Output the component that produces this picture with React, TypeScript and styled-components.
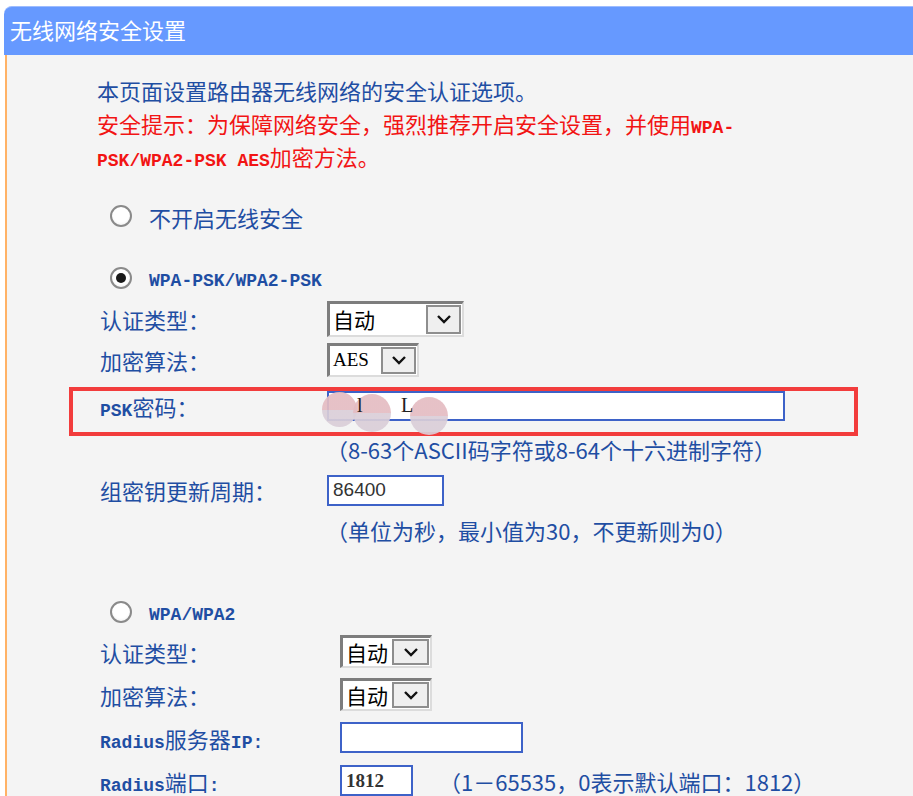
import React from "react";
import styled, { createGlobalStyle } from "styled-components";

const GlobalStyle = createGlobalStyle`
  html, body { margin: 0; padding: 0; background: #ffffff; }
  body { font-family: "Noto Sans CJK SC", sans-serif; }
  #root { width: 913px; height: 796px; overflow: hidden; }
`;

const BLUE = "#1f4ea3";
const RED = "#f21414";

const Page = styled.div`
  padding: 6px 0 0 4px;
  height: 796px;
  box-sizing: border-box;
  overflow: hidden;
`;

const Header = styled.div`
  height: 49px;
  box-sizing: border-box;
  background: #6699ff;
  border-top: 1px solid #9dbcff;
  border-top-left-radius: 8px;
  color: #ffffff;
  font-size: 22px;
  display: flex;
  align-items: center;
  padding: 0 0 5px 6px;
`;

const Body = styled.div`
  margin-left: 1px;
  background: #f4f4f4;
  border-left: 2px solid #ffb266;
  height: 741px;
  box-sizing: border-box;
  padding: 19px 0 0 93px;
  display: flex;
  flex-direction: column;
  color: ${BLUE};
  font-size: 22px;
`;

const Intro = styled.div`
  margin-left: -3px;
`;

const Line = styled.div<{ $red?: boolean }>`
  height: 33px;
  line-height: 33px;
  white-space: nowrap;
  color: ${(p) => (p.$red ? RED : "inherit")};
`;

const Lat = styled.span<{ $bold?: boolean; $size?: number }>`
  font-family: "Liberation Mono", monospace;
  font-size: ${(p) => p.$size ?? 18}px;
  font-weight: ${(p) => (p.$bold ? 700 : 400)};
`;

const Row = styled.div<{ $mt: number; $h: number }>`
  display: flex;
  align-items: center;
  margin-top: ${(p) => p.$mt}px;
  height: ${(p) => p.$h}px;
`;

const Label = styled.div<{ $w: number }>`
  width: ${(p) => p.$w}px;
  flex: none;
  white-space: nowrap;
`;

const RadioRow = styled(Row)`
  padding-left: 10px;
  gap: 17px;
`;

const RadioLabel = styled.span<{ $latin?: boolean }>`
  padding-top: ${(p) => (p.$latin ? 6 : 2)}px;
  font-family: ${(p) =>
    p.$latin ? `"Liberation Mono", monospace` : `"Noto Sans CJK SC", sans-serif`};
  font-size: ${(p) => (p.$latin ? 18 : 22)}px;
  font-weight: ${(p) => (p.$latin ? 700 : 400)};
`;

const RadioDot = styled.span<{ $checked?: boolean }>`
  width: 22px;
  height: 22px;
  box-sizing: border-box;
  border-radius: 50%;
  border: 2px solid #8a8a8a;
  background: radial-gradient(circle at 50% 40%, #ffffff 55%, #e8e8e8 100%);
  display: flex;
  align-items: center;
  justify-content: center;
  &::after {
    content: "";
    display: ${(p) => (p.$checked ? "block" : "none")};
    width: 10px;
    height: 10px;
    border-radius: 50%;
    background: #1a1a1a;
  }
`;

const SelectBox = styled.div<{ $w: number; $h: number }>`
  width: ${(p) => p.$w}px;
  height: ${(p) => p.$h}px;
  box-sizing: border-box;
  background: #ffffff;
  border-top: 3px solid #7d7d7d;
  border-left: 3px solid #7d7d7d;
  border-right: 2px solid #dcdcdc;
  border-bottom: 2px solid #dcdcdc;
  display: flex;
  align-items: stretch;
  color: #000000;
`;

const SelectText = styled.div<{ $serif?: boolean }>`
  flex: 1;
  display: flex;
  align-items: center;
  padding-left: 3px;
  font-family: ${(p) =>
    p.$serif ? `"Liberation Serif", serif` : `"Noto Sans CJK SC", sans-serif`};
  font-size: ${(p) => (p.$serif ? 19 : 21)}px;
`;

const SelectButton = styled.div<{ $bw: number }>`
  width: ${(p) => p.$bw}px;
  margin: 1px 1px 1px 0;
  box-sizing: border-box;
  background: #efefef;
  border: 2px solid #8e8e8e;
  display: flex;
  align-items: center;
  justify-content: center;
`;

const Chevron = () => (
  <svg width="16" height="10" viewBox="0 0 16 10">
    <polyline points="2,2 8,8 14,2" fill="none" stroke="#111" strokeWidth="2.4" />
  </svg>
);

const Select = ({
  w,
  h,
  bw,
  value,
  serif,
}: {
  w: number;
  h: number;
  bw: number;
  value: string;
  serif?: boolean;
}) => (
  <SelectBox $w={w} $h={h}>
    <SelectText $serif={serif}>{value}</SelectText>
    <SelectButton $bw={bw}>
      <Chevron />
    </SelectButton>
  </SelectBox>
);

const Input = styled.div<{ $w: number; $h: number; $serif?: boolean }>`
  position: relative;
  width: ${(p) => p.$w}px;
  height: ${(p) => p.$h}px;
  box-sizing: border-box;
  background: #ffffff;
  border: 2px solid #3d62c8;
  display: flex;
  align-items: center;
  padding-left: 4px;
  color: #333333;
  font-family: ${(p) =>
    p.$serif ? `"Liberation Serif", serif` : `"Liberation Sans", sans-serif`};
  font-size: 19px;
  font-weight: ${(p) => (p.$serif ? 700 : 400)};
`;

const Highlight = styled.div`
  margin-top: 10px;
  margin-left: -31px;
  width: 789px;
  box-sizing: border-box;
  border: 4px solid #f23c3c;
  padding: 0 0 11px 27px;
`;

const Blob = styled.span<{ $x: number; $y: number; $d: number }>`
  position: absolute;
  left: ${(p) => p.$x}px;
  top: ${(p) => p.$y}px;
  width: ${(p) => p.$d}px;
  height: ${(p) => p.$d}px;
  border-radius: 50%;
  background: linear-gradient(
    to bottom,
    rgba(228, 188, 194, 0.92) 0%,
    rgba(228, 188, 194, 0.92) 50%,
    rgba(218, 206, 216, 0.92) 50%,
    rgba(218, 206, 216, 0.92) 100%
  );
`;

const Glyph = styled.span<{ $x: number }>`
  position: absolute;
  left: ${(p) => p.$x}px;
  top: 1px;
  font-family: "Liberation Serif", serif;
  font-size: 20px;
  font-weight: 400;
  color: #222;
  z-index: 1;
`;

const Hint = styled.div<{ $mt: number; $pl: number; $h?: number }>`
  margin-top: ${(p) => p.$mt}px;
  padding-left: ${(p) => p.$pl}px;
  height: ${(p) => p.$h ?? 26}px;
  display: flex;
  align-items: center;
  white-space: nowrap;
`;

const InlineHint = styled.span`
  margin-left: 26px;
  white-space: nowrap;
`;

export default function App() {
  return (
    <>
      <GlobalStyle />
      <Page>
        <Header>无线网络安全设置</Header>
        <Body>
          <Intro>
            <Line>本页面设置路由器无线网络的安全认证选项。</Line>
            <Line $red>
              安全提示：为保障网络安全，强烈推荐开启安全设置，并使用<Lat $bold>WPA-</Lat>
            </Line>
            <Line $red>
              <Lat $bold>PSK/WPA2-PSK AES</Lat>加密方法。
            </Line>
          </Intro>

          <RadioRow $mt={26} $h={34}>
            <RadioDot />
            <RadioLabel>不开启无线安全</RadioLabel>
          </RadioRow>

          <RadioRow $mt={30} $h={34}>
            <RadioDot $checked />
            <RadioLabel $latin>WPA-PSK/WPA2-PSK</RadioLabel>
          </RadioRow>

          <Row $mt={8} $h={36}>
            <Label $w={227}>认证类型：</Label>
            <Select w={137} h={36} bw={35} value="自动" />
          </Row>

          <Row $mt={6} $h={34}>
            <Label $w={227}>加密算法：</Label>
            <Select w={92} h={34} bw={35} value="AES" serif />
          </Row>

          <Highlight>
            <Row $mt={0} $h={30}>
              <Label $w={227}>
                <Lat $bold>PSK</Lat>密码：
              </Label>
              <Input $w={458} $h={30} $serif>
                <Glyph $x={28}>l</Glyph>
                <Glyph $x={72}>L</Glyph>
                <Blob $x={-7} $y={-1} $d={35} />
                <Blob $x={24} $y={1} $d={38} />
                <Blob $x={81} $y={4} $d={38} />
              </Input>
            </Row>
          </Highlight>

          <Hint $mt={0} $pl={226}>
            （8-63个ASCII码字符或8-64个十六进制字符）
          </Hint>

          <Row $mt={13} $h={31}>
            <Label $w={227}>组密钥更新周期：</Label>
            <Input $w={117} $h={31}>
              86400
            </Input>
          </Row>

          <Hint $mt={11} $pl={226}>
            （单位为秒，最小值为30，不更新则为0）
          </Hint>

          <RadioRow $mt={55} $h={34}>
            <RadioDot />
            <RadioLabel $latin>WPA/WPA2</RadioLabel>
          </RadioRow>

          <Row $mt={8} $h={33}>
            <Label $w={240}>认证类型：</Label>
            <Select w={92} h={33} bw={37} value="自动" />
          </Row>

          <Row $mt={10} $h={33}>
            <Label $w={240}>加密算法：</Label>
            <Select w={92} h={33} bw={37} value="自动" />
          </Row>

          <Row $mt={11} $h={31}>
            <Label $w={240}>
              <Lat $bold>Radius</Lat>服务器<Lat $bold>IP:</Lat>
            </Label>
            <Input $w={183} $h={31} />
          </Row>

          <Row $mt={12} $h={31}>
            <Label $w={240}>
              <Lat $bold>Radius</Lat>端口<Lat $bold>:</Lat>
            </Label>
            <Input $w={73} $h={31} $serif>
              1812
            </Input>
            <InlineHint>（1－65535，0表示默认端口：1812）</InlineHint>
          </Row>
        </Body>
      </Page>
    </>
  );
}
